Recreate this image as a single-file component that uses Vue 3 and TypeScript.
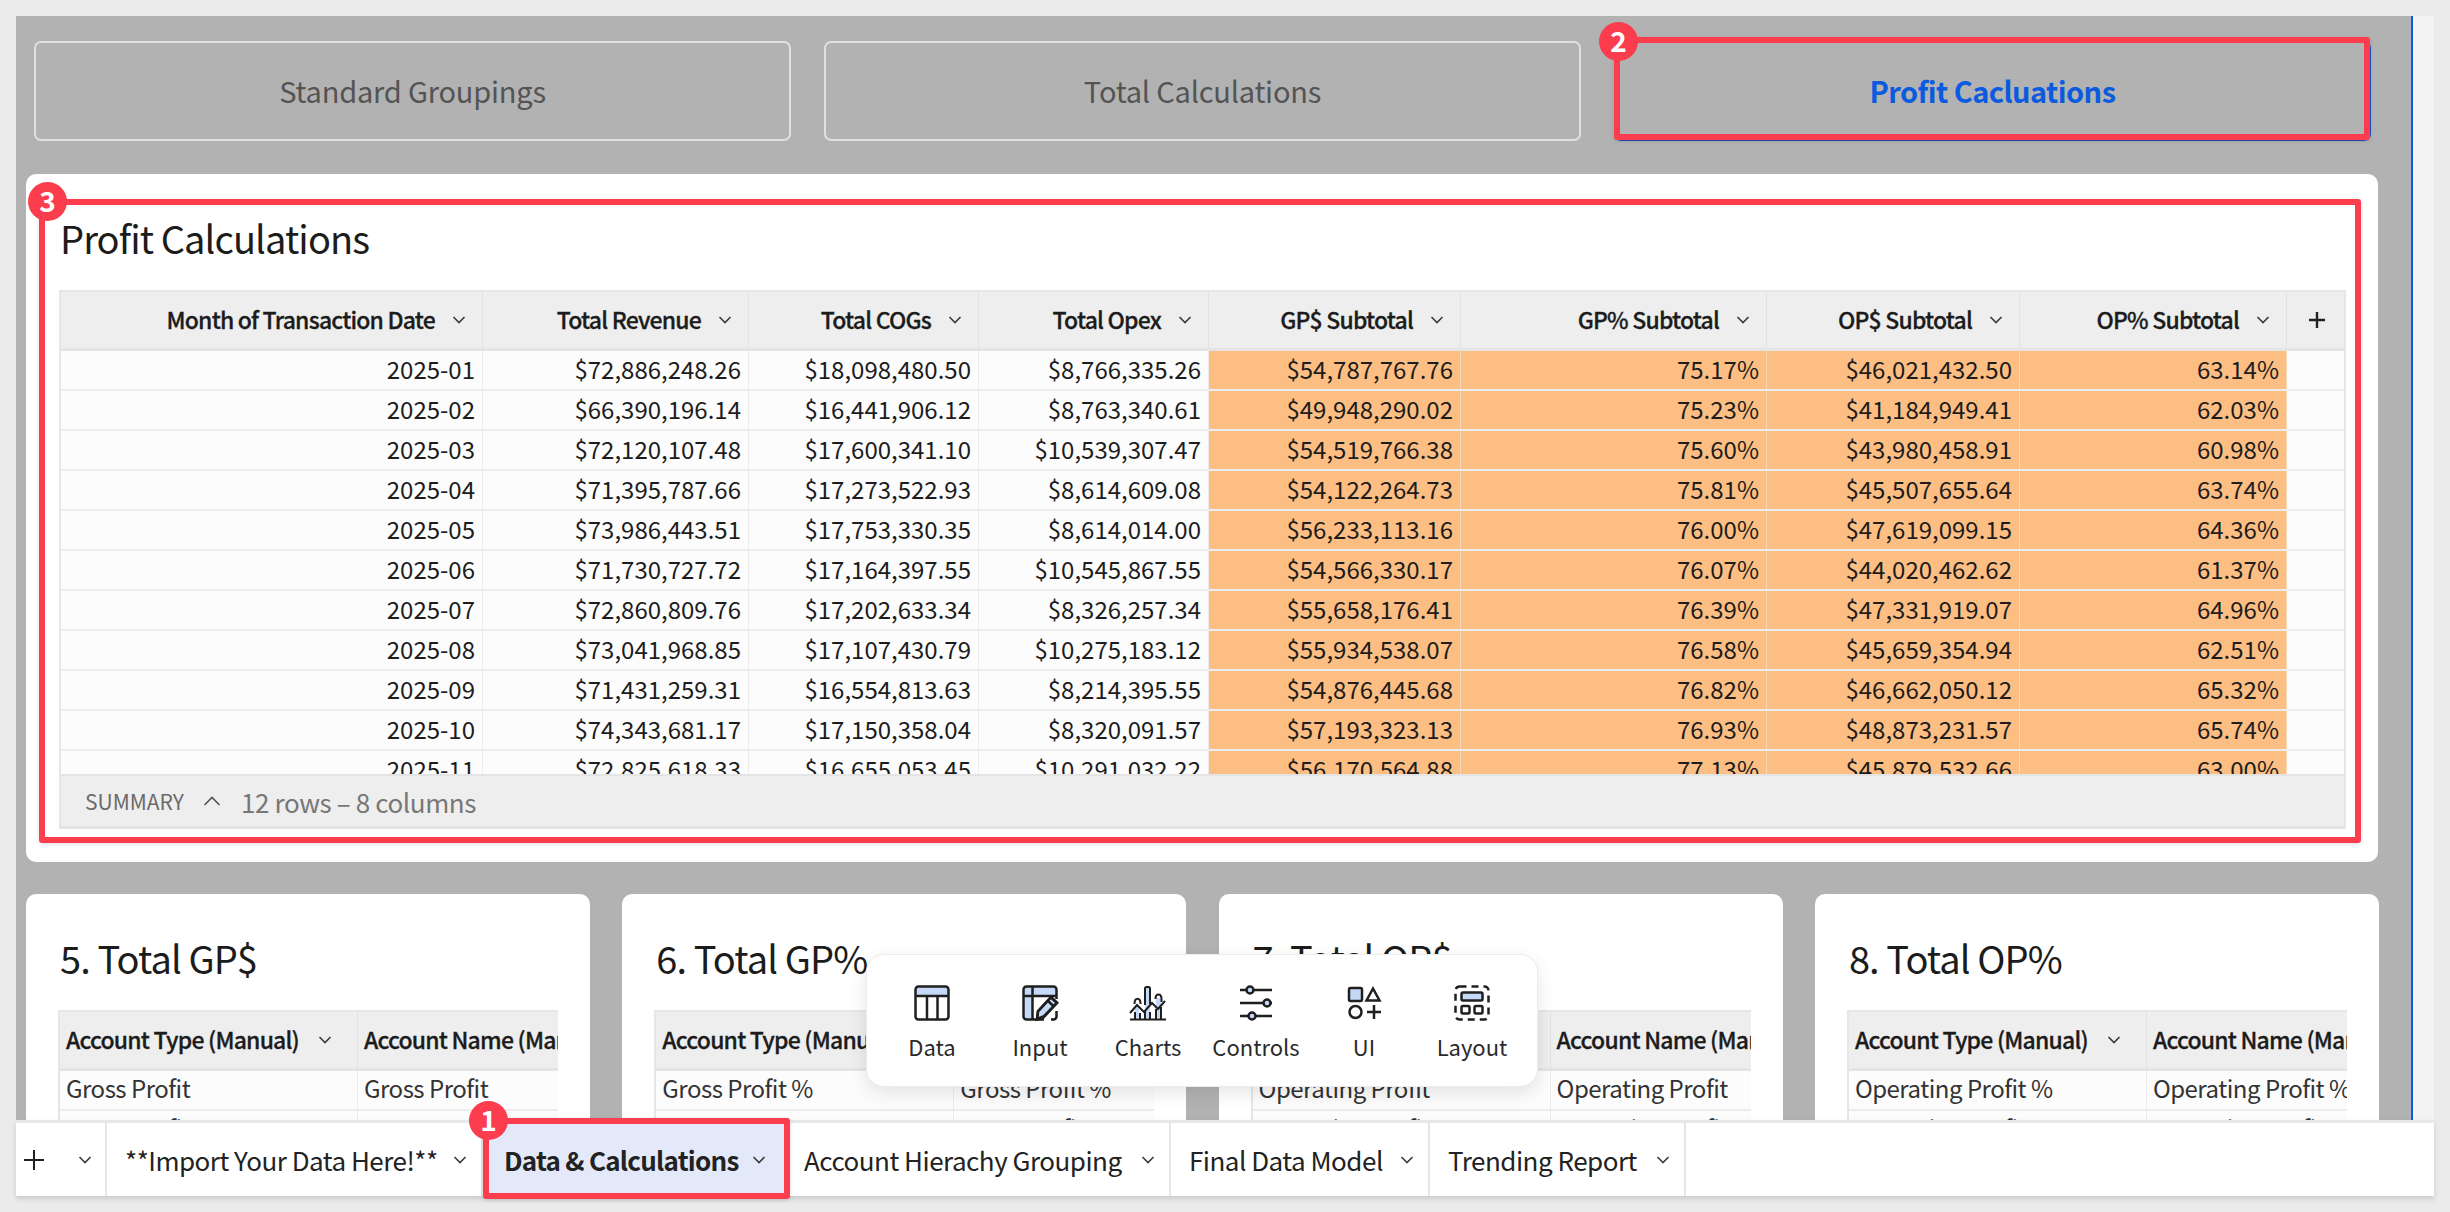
<template>
  <div class="page">
    <div class="main">
      <div class="canvas">
        <div class="nav-row">
          <div class="nav-btn">Standard Groupings</div>
          <div class="nav-btn">Total Calculations</div>
          <div class="nav-btn active">Profit Cacluations</div>
        </div>

        <section class="card big">
          <h2 class="title">Profit Calculations</h2>
          <div class="table">
            <div class="thead">
              <div
                v-for="(col, i) in columns"
                :key="col"
                class="th"
                :style="{ width: widths[i] + 'px' }"
              >
                <span>{{ col }}</span>
                <svg class="chev" viewBox="0 0 14 8"><path d="M1.5 1 7 6.5 12.5 1" /></svg>
              </div>
              <div class="th plus" :style="{ width: widths[8] + 'px' }">
                <svg viewBox="0 0 16 16"><path d="M8 0v16M0 8h16" /></svg>
              </div>
            </div>
            <div class="tbody">
              <div v-for="row in rows" :key="row[0]" class="tr">
                <div
                  v-for="(val, i) in row"
                  :key="i"
                  class="td"
                  :class="{ hot: i >= 4 }"
                  :style="{ width: widths[i] + 'px' }"
                >{{ val }}</div>
                <div class="td" :style="{ width: widths[8] + 'px' }"></div>
              </div>
            </div>
            <div class="summary">
              <span class="sum-label">SUMMARY</span>
              <svg class="sum-chev" viewBox="0 0 18 10"><path d="M1.5 9 9 1.5 16.5 9" /></svg>
              <span class="sum-count">12 rows – 8 columns</span>
            </div>
          </div>
        </section>

        <div class="small-row">
          <section v-for="c in smallCards" :key="c.title" class="card small">
            <h2 class="title">{{ c.title }}</h2>
            <div class="table mini">
              <div class="thead">
                <div class="th first">
                  <span>Account Type (Manual)</span>
                  <svg class="chev" viewBox="0 0 14 8"><path d="M1.5 1 7 6.5 12.5 1" /></svg>
                </div>
                <div class="th rest"><span>Account Name (Manual)</span></div>
              </div>
              <div v-for="n in 2" :key="n" class="tr">
                <div class="td first">{{ c.label }}</div>
                <div class="td rest">{{ c.label }}</div>
              </div>
            </div>
          </section>
        </div>
      </div>
      <div class="side"></div>
    </div>

    <div class="tabs">
      <div class="tab add">
        <svg class="add-icon" viewBox="0 0 20 20"><path d="M10 0v20M0 10h20" /></svg>
        <svg class="chev" viewBox="0 0 14 8"><path d="M1.5 1 7 6.5 12.5 1" /></svg>
      </div>
      <div
        v-for="t in tabs"
        :key="t.name"
        class="tab"
        :class="{ current: t.current }"
        :style="{ width: t.width + 'px' }"
      >
        <span>{{ t.name }}</span>
        <svg class="chev" viewBox="0 0 14 8"><path d="M1.5 1 7 6.5 12.5 1" /></svg>
      </div>
    </div>

    <!-- floating toolbar -->
    <div class="toolbar">
      <div class="tool">
        <svg viewBox="0 0 36 36">
          <path class="fill" d="M2 10V4a2 2 0 0 1 2-2h28a2 2 0 0 1 2 2v6z" />
          <rect x="1.5" y="1.5" width="33" height="33" rx="3" />
          <path d="M1.5 11h33M13 11v23M23.500 11v23" />
        </svg>
        <span>Data</span>
      </div>
      <div class="tool">
        <svg viewBox="0 0 36 36">
          <path class="fill" d="M2 2h32v9H2zM2 11h9v23H2z" />
          <path d="M22 34.500H4.500a3 3 0 0 1-3-3v-27a3 3 0 0 1 3-3h27a3 3 0 0 1 3 3V14M34.500 26v5.500a3 3 0 0 1-3 3H29M1.500 11H34M10.500 1.500v33" />
          <path class="fill" d="m15 34 1-8 13-14 6 5.500-13.500 14z" />
          <path d="m15 34.500 1-8 13-14 6 5.500-13.500 14.500zM26 16l6 5.500" />
        </svg>
        <span>Input</span>
      </div>
      <div class="tool">
        <svg viewBox="0 0 36 36">
          <path class="fill" d="M5 33V21h4v12zM15 33V3h5v30zM26 33V13h5v20z" />
          <path class="thin" d="M15 20V3.500A1.500 1.500 0 0 1 16.500 2h2A1.500 1.500 0 0 1 20 3.500V19M4.500 19c0-7 6-7 6 0M25.500 14c0-6 6-6 6 0v3M0 34.500h36M5 34v-7M10 34v-6M15 34v-9M20 34v-7M26 34v-10M31 34V22" />
          <path class="thin" d="m0 28 7-8 7 7 8-9 6 6 7-8" />
        </svg>
        <span>Charts</span>
      </div>
      <div class="tool">
        <svg viewBox="0 0 36 36">
          <path d="M2 5h7M15 5h19M2 18h24M32 18h2M2 31h9M17 31h17" />
          <circle class="fill" cx="12" cy="5" r="3.500" />
          <circle class="fill" cx="29" cy="18" r="3.500" />
          <circle class="fill" cx="14" cy="31" r="3.500" />
        </svg>
        <span>Controls</span>
      </div>
      <div class="tool">
        <svg viewBox="0 0 36 36">
          <rect class="fill" x="3" y="3" width="13" height="13" rx="1.500" />
          <path d="M27 3.500 33.500 15.500h-13z" />
          <circle cx="9.500" cy="27" r="6" />
          <path d="M21 27h14M28 20v14" />
        </svg>
        <span>UI</span>
      </div>
      <div class="tool">
        <svg viewBox="0 0 36 36">
          <rect class="dashed" x="1.500" y="1.500" width="33" height="33" rx="4" />
          <rect class="fill" x="7.500" y="7.500" width="21" height="8" rx="1.500" />
          <rect x="7.500" y="21" width="8" height="7.500" rx="1.500" />
          <rect x="20.500" y="21" width="8" height="7.500" rx="1.500" />
        </svg>
        <span>Layout</span>
      </div>
    </div>

    <!-- annotation overlays -->
    <div class="mark mark-1"></div>
    <div class="mark mark-2"></div>
    <div class="mark mark-3"></div>
    <div class="badge badge-1">1</div>
    <div class="badge badge-2">2</div>
    <div class="badge badge-3">3</div>
  </div>
</template>

<script setup lang="ts">
const columns = [
  'Month of Transaction Date',
  'Total Revenue',
  'Total COGs',
  'Total Opex',
  'GP$ Subtotal',
  'GP% Subtotal',
  'OP$ Subtotal',
  'OP% Subtotal'
]

const widths = [422, 266, 230, 230, 252, 306, 253, 267, 60]

const rows = [
  ['2025-01', '$72,886,248.26', '$18,098,480.50', '$8,766,335.26', '$54,787,767.76', '75.17%', '$46,021,432.50', '63.14%'],
  ['2025-02', '$66,390,196.14', '$16,441,906.12', '$8,763,340.61', '$49,948,290.02', '75.23%', '$41,184,949.41', '62.03%'],
  ['2025-03', '$72,120,107.48', '$17,600,341.10', '$10,539,307.47', '$54,519,766.38', '75.60%', '$43,980,458.91', '60.98%'],
  ['2025-04', '$71,395,787.66', '$17,273,522.93', '$8,614,609.08', '$54,122,264.73', '75.81%', '$45,507,655.64', '63.74%'],
  ['2025-05', '$73,986,443.51', '$17,753,330.35', '$8,614,014.00', '$56,233,113.16', '76.00%', '$47,619,099.15', '64.36%'],
  ['2025-06', '$71,730,727.72', '$17,164,397.55', '$10,545,867.55', '$54,566,330.17', '76.07%', '$44,020,462.62', '61.37%'],
  ['2025-07', '$72,860,809.76', '$17,202,633.34', '$8,326,257.34', '$55,658,176.41', '76.39%', '$47,331,919.07', '64.96%'],
  ['2025-08', '$73,041,968.85', '$17,107,430.79', '$10,275,183.12', '$55,934,538.07', '76.58%', '$45,659,354.94', '62.51%'],
  ['2025-09', '$71,431,259.31', '$16,554,813.63', '$8,214,395.55', '$54,876,445.68', '76.82%', '$46,662,050.12', '65.32%'],
  ['2025-10', '$74,343,681.17', '$17,150,358.04', '$8,320,091.57', '$57,193,323.13', '76.93%', '$48,873,231.57', '65.74%'],
  ['2025-11', '$72,825,618.33', '$16,655,053.45', '$10,291,032.22', '$56,170,564.88', '77.13%', '$45,879,532.66', '63.00%']
]

const smallCards = [
  { title: '5. Total GP$', label: 'Gross Profit' },
  { title: '6. Total GP%', label: 'Gross Profit %' },
  { title: '7. Total OP$', label: 'Operating Profit' },
  { title: '8. Total OP%', label: 'Operating Profit %' }
]

const tabs = [
  { name: '**Import Your Data Here!**', width: 376, current: false },
  { name: 'Data & Calculations', width: 307, current: true },
  { name: 'Account Hierachy Grouping', width: 381, current: false },
  { name: 'Final Data Model', width: 259, current: false },
  { name: 'Trending Report', width: 256, current: false }
]
</script>

<style>
body {
  background: #ebebeb;
}
</style>

<style scoped>
.page {
  position: relative;
  width: 2450px;
  height: 1212px;
  overflow: hidden;
  padding: 16px 16px 0;
  box-sizing: border-box;
  font-family: "Noto Sans CJK SC", "Noto Sans", sans-serif;
  color: #1c1c1c;
}

.main {
  display: flex;
  height: 1104px;
  overflow: hidden;
}

.canvas {
  width: 2395px;
  background: #b2b2b2;
  padding: 25px 0 0 10px;
  box-sizing: border-box;
  overflow: hidden;
}

.side {
  flex: 1;
  background: #f3f3f3;
  border-left: 2px solid #0b5be0;
}

.nav-row {
  display: grid;
  grid-template-columns: repeat(3, 757px);
  column-gap: 33px;
  margin-left: 8px;
  height: 100px;
}

.nav-btn {
  display: flex;
  align-items: center;
  justify-content: center;
  border: 2px solid #e0e0e0;
  border-radius: 7px;
  box-sizing: border-box;
  padding-bottom: 3px;
  font-size: 29px;
  letter-spacing: -0.2px;
  color: #545454;
}

.nav-btn.active {
  border-color: #1d4fc4;
  color: #0b5be0;
  font-weight: 700;
  letter-spacing: -0.55px;
}

.card {
  background: #fff;
  border-radius: 10px;
  box-sizing: border-box;
}

.big {
  width: 2352px;
  height: 688px;
  margin-top: 33px;
  padding: 0 32px 0 33px;
  overflow: hidden;
}

.title {
  margin: 0;
  font-size: 38px;
  font-weight: 400;
  line-height: 50px;
  letter-spacing: -0.9px;
  color: #1c1c1c;
}

.big .title {
  padding: 39px 0 27px 1px;
}

.table {
  border: 2px solid #e6e6e6;
  border-bottom-width: 0;
  box-sizing: border-box;
  overflow: hidden;
  background: #fcfcfc;
}

.thead {
  display: flex;
  height: 56px;
  background: #eeeeee;
  border-bottom: 3px solid #e4e4e4;
  box-sizing: content-box;
}

.th {
  display: flex;
  align-items: center;
  justify-content: flex-end;
  gap: 17px;
  padding-right: 16px;
  box-sizing: border-box;
  flex: none;
  font-size: 23px;
  font-weight: 500;
  letter-spacing: -0.8px;
  -webkit-text-stroke: 0.3px #1c1c1c;
  white-space: nowrap;
  border-right: 1px solid #e2e2e2;
}

.th span {
  position: relative;
  top: -1px;
}

.chev {
  width: 14px;
  height: 8px;
  flex: none;
  fill: none;
  stroke: #3a3a3a;
  stroke-width: 1.6;
}

.th.plus {
  justify-content: center;
  padding: 0;
  border-right: 0;
}

.plus svg {
  width: 16px;
  height: 16px;
  fill: none;
  stroke: #222;
  stroke-width: 2.4;
}

.tbody {
  height: 423px;
  overflow: hidden;
}

.tr {
  display: flex;
  height: 40px;
  box-sizing: border-box;
  border-bottom: 2px solid #ececec;
}

.td {
  flex: none;
  box-sizing: border-box;
  padding-right: 7px;
  font-size: 24px;
  line-height: 35px;
  text-align: right;
  white-space: nowrap;
  border-right: 1px solid #ececec;
}

.td.hot {
  background: #fdbe83;
  border-right-color: #f6d7b8;
}

.summary {
  display: flex;
  align-items: center;
  height: 55px;
  background: #eeeeee;
  border-top: 2px solid #e4e4e4;
  border-bottom: 3px solid #e4e4e4;
  box-sizing: border-box;
  padding-left: 24px;
  color: #6a6a6a;
}

.sum-label {
  font-size: 21px;
}

.sum-chev {
  width: 18px;
  height: 10px;
  margin: 0 20px 0 19px;
  fill: none;
  stroke: #555;
  stroke-width: 1.6;
}

.sum-count {
  font-size: 26px;
  letter-spacing: -0.4px;
  color: #777;
}

.small-row {
  display: grid;
  grid-template-columns: repeat(4, 564px);
  column-gap: 32.3px;
  margin-top: 32px;
}

.small {
  height: 400px;
  padding: 39px 32px 0;
}

.small .title {
  padding-left: 2px;
  margin-bottom: 27px;
}

.mini {
  width: 500px;
  border-right: 0;
}

.mini .th {
  justify-content: flex-start;
  padding: 0 0 0 6px;
  gap: 19px;
}

.mini .first {
  width: 298px;
}

.mini .rest {
  flex: 1;
  min-width: 0;
  overflow: hidden;
  border-right: 0;
}

.mini .td {
  text-align: left;
  padding: 0 0 0 6px;
  line-height: 33px;
  letter-spacing: -0.5px;
  color: #333;
}

.tabs {
  display: flex;
  width: 2418px;
  height: 76px;
  background: #fff;
  border-top: 3px solid #e8e8e8;
  box-sizing: border-box;
  box-shadow: 0 3px 5px rgba(0, 0, 0, 0.14);
  position: relative;
}

.tab {
  display: flex;
  align-items: center;
  justify-content: space-between;
  flex: none;
  padding: 0 14px 0 18px;
  box-sizing: border-box;
  border-right: 2px solid #e6e6e6;
  font-size: 26px;
  letter-spacing: -0.5px;
  white-space: nowrap;
  color: #222;
}

.tab.add {
  width: 91px;
  padding: 0 13px 0 8px;
}

.add-icon {
  width: 20px;
  height: 20px;
  fill: none;
  stroke: #222;
  stroke-width: 2;
}

.tab.current {
  background: #e3e9f8;
  font-weight: 700;
  letter-spacing: -0.75px;
  padding-left: 21px;
  padding-right: 22px;
}

.tab.current + .tab {
  padding-left: 14px;
}

.toolbar {
  position: absolute;
  left: 866px;
  top: 954px;
  width: 672px;
  height: 133px;
  display: flex;
  padding: 30px 11px 0;
  box-sizing: border-box;
  background: #fff;
  border: 1px solid #ececec;
  border-radius: 18px;
  box-shadow: 0 6px 18px rgba(0, 0, 0, 0.1);
}

.tool {
  width: 108.400px;
  display: flex;
  flex-direction: column;
  align-items: center;
  font-size: 22px;
  line-height: 32px;
  color: #2a2a2a;
}

.tool svg {
  width: 36px;
  height: 36px;
  margin-bottom: 9px;
  fill: none;
  stroke: #1f1f1f;
  stroke-width: 2.500;
  overflow: visible;
}

.tool .thin {
  stroke-width: 2;
}

.tool .fill {
  fill: #c6d8f8;
}

.tool path.fill:first-child {
  stroke: none;
}

.tool .dashed {
  stroke-dasharray: 7 5;
}

.mark {
  position: absolute;
  border: 6px solid #fb3d4e;
  border-radius: 3px;
  box-sizing: border-box;
  box-shadow: 0 1px 4px rgba(0, 0, 0, 0.14);
  pointer-events: none;
}

.mark-1 {
  left: 483px;
  top: 1118px;
  width: 307px;
  height: 81px;
}

.mark-2 {
  left: 1614px;
  top: 37px;
  width: 756px;
  height: 103px;
}

.mark-3 {
  left: 39px;
  top: 199px;
  width: 2322px;
  height: 644px;
}

.badge {
  position: absolute;
  width: 39px;
  height: 39px;
  border-radius: 50%;
  background: #fb3d4e;
  color: #fff;
  font-size: 28px;
  font-weight: 700;
  line-height: 37px;
  text-align: center;
}

.badge-1 {
  left: 469px;
  top: 1101px;
}

.badge-2 {
  left: 1599px;
  top: 22px;
}

.badge-3 {
  left: 28px;
  top: 182px;
}
</style>
